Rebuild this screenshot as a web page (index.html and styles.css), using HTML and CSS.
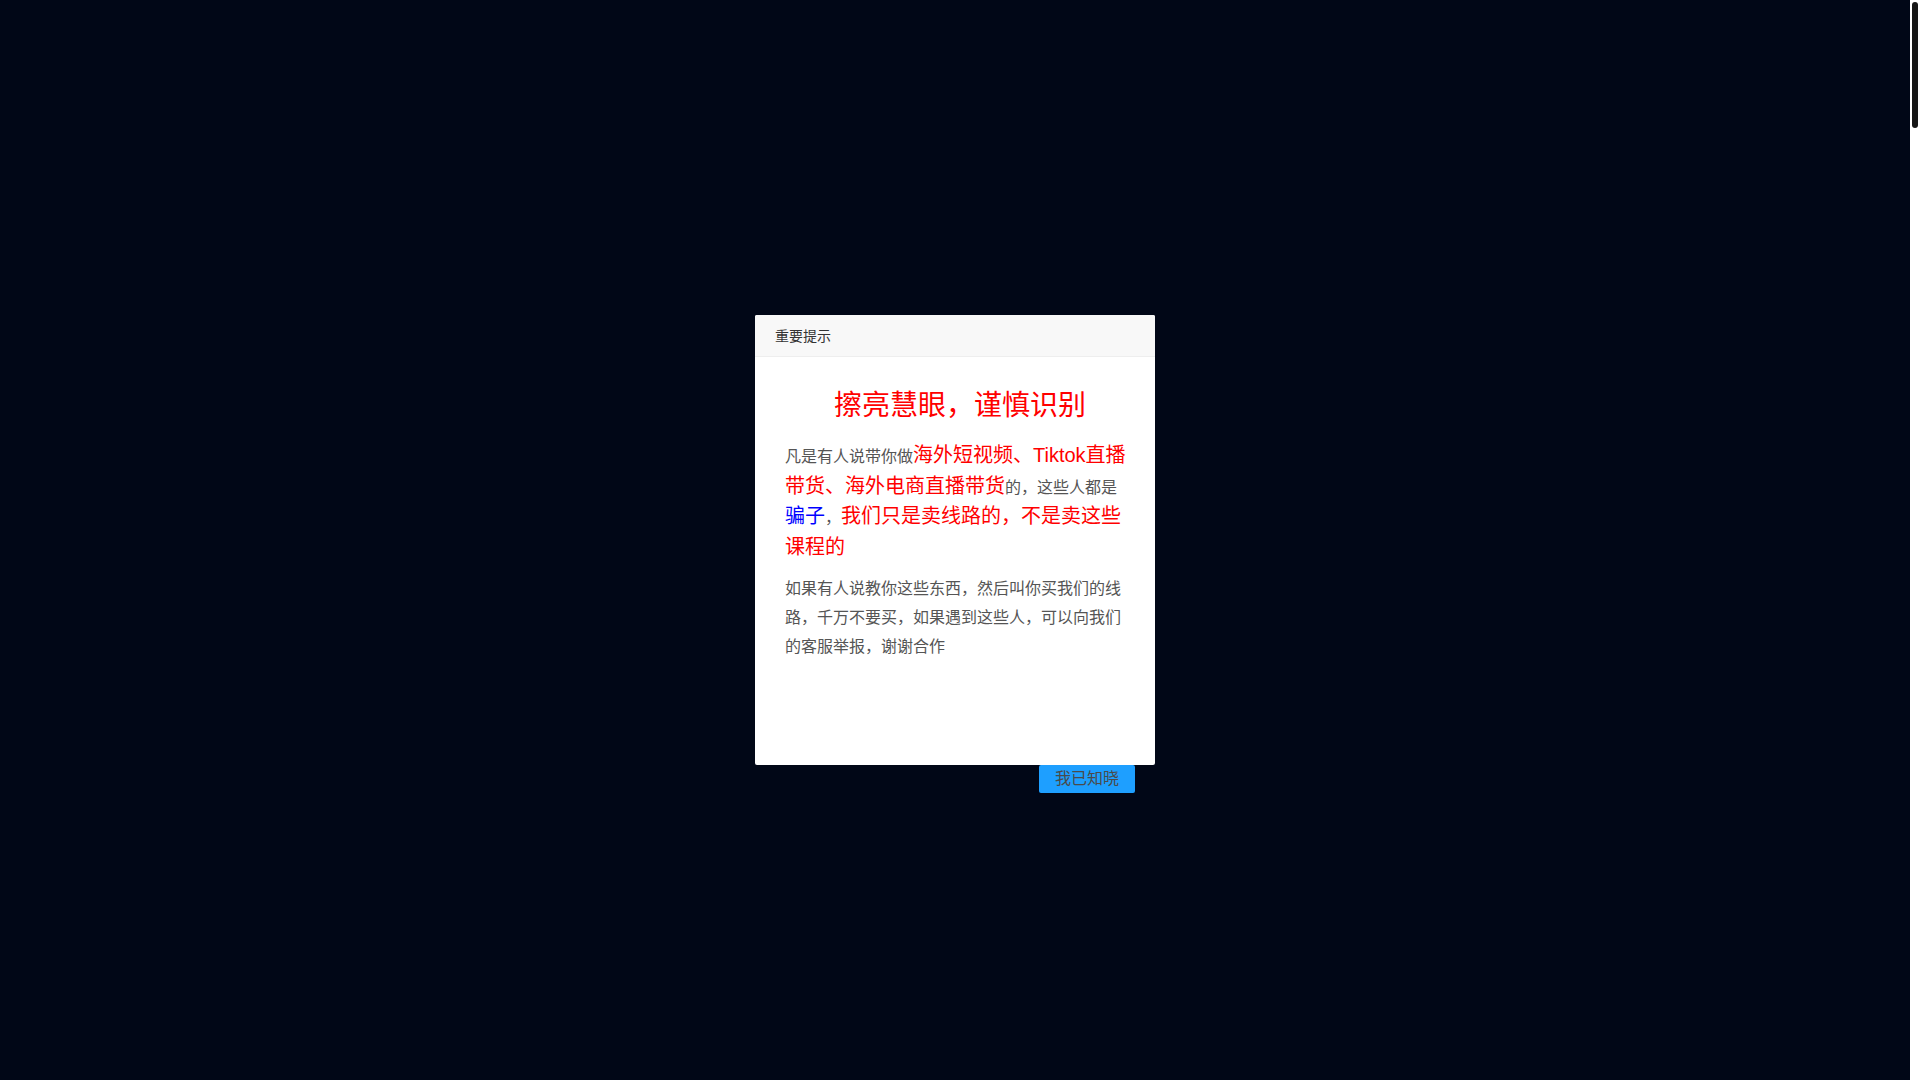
FILE: index.html
```html
<!DOCTYPE html>
<html lang="zh-CN">
<head>
<meta charset="utf-8">
<title>重要提示</title>
<link rel="stylesheet" href="styles.css">
</head>
<body>
<div class="stage">
  <div class="layer">
    <div class="layer-box">
      <div class="layer-title">重要提示</div>
      <div class="layer-content">
        <h2 class="warn-title">擦亮慧眼，谨慎识别</h2>
        <p class="warn-text">凡是有人说带你做<span class="red">海外短视频、Tiktok直播带货、海外电商直播带货</span>的，这些人都是<span class="blue">骗子</span>，<span class="red">我们只是卖线路的，不是卖这些课程的</span></p>
        <p class="note-text">如果有人说教你这些东西，然后叫你买我们的线路，千万不要买，如果遇到这些人，可以向我们的客服举报，谢谢合作</p>
      </div>
    </div>
    <div class="layer-btns"><a class="layer-btn">我已知晓</a></div>
  </div>
</div>
<div class="scrollbar"><div class="scroll-thumb"></div></div>
</body>
</html>
```
FILE: styles.css
```css
html,
body {
  height: 100%;
}
body {
  margin: 0;
  display: flex;
  overflow: hidden;
  background: #010717;
  font-family: "Liberation Sans", "Noto Sans CJK SC", sans-serif;
}
.stage {
  flex: 1;
  display: flex;
  justify-content: center;
  align-items: flex-start;
  padding-top: 315px;
}
.scrollbar {
  width: 10px;
  background: #ffffff;
  padding: 2px 2px 0;
  box-sizing: border-box;
}
.scroll-thumb {
  height: 126px;
  background: #161616;
  border-radius: 3px;
}
.layer {
  width: 400px;
}
.layer-box {
  height: 450px;
  background: #ffffff;
  border-radius: 2px;
  overflow: hidden;
}
.layer-title {
  height: 41px;
  line-height: 42px;
  padding: 0 80px 0 20px;
  border-bottom: 1px solid #eeeeee;
  background: #f8f8f8;
  color: #333333;
  font-size: 14px;
}
.layer-content {
  padding: 28px 26px 0 30px;
}
.warn-title {
  margin: 0;
  padding-left: 6px;
  text-align: center;
  font-size: 28px;
  font-weight: normal;
  line-height: 42px;
  color: #ff0000;
}
.warn-text {
  margin: 14px 0 0;
  font-size: 16px;
  line-height: 28.7px;
  color: #555555;
}
.red {
  color: #ff0000;
  font-size: 20px;
}
.blue {
  color: #0000ff;
  font-size: 20px;
}
.note-text {
  margin: 10px 0 0;
  font-size: 16px;
  line-height: 29px;
  color: #555555;
}
.layer-btns {
  display: flex;
  justify-content: flex-end;
  padding: 0 20px;
}
.layer-btn {
  display: block;
  height: 28px;
  line-height: 28px;
  padding: 0 16px;
  background: #1e9fff;
  border-radius: 2px;
  color: #4a4a4a;
  font-size: 16px;
}
```
